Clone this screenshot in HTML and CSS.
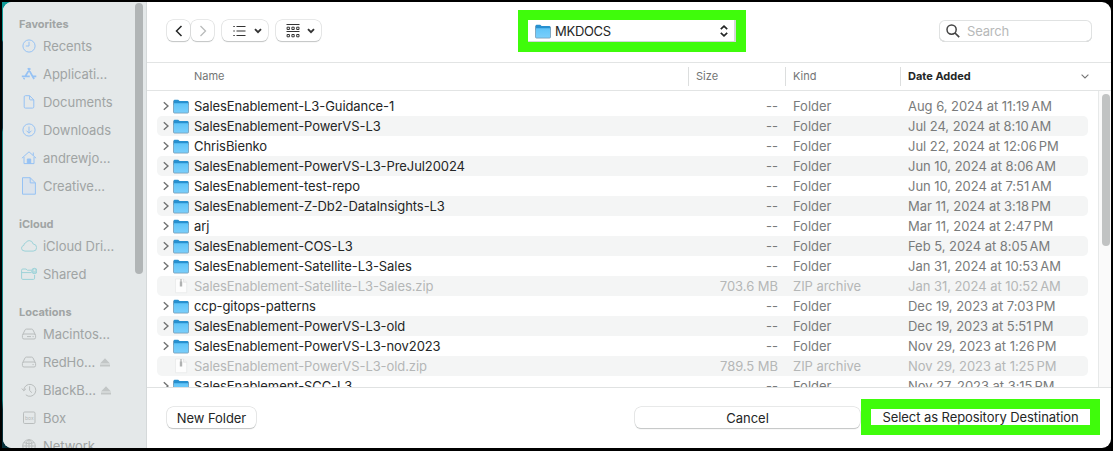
FILE: index.html
```html
<!DOCTYPE html>
<html lang="en">
<head>
<meta charset="utf-8">
<title>Select Repository Destination</title>
<link rel="stylesheet" href="styles.css">
</head>
<body>
<svg class="defs" width="0" height="0" aria-hidden="true">
  <defs>
    <linearGradient id="blue" x1="0" y1="0" x2="0" y2="1"><stop offset="0" stop-color="#5fc4f8"/><stop offset="1" stop-color="#7bcffb"/></linearGradient>
    <symbol id="folder" viewBox="0 0 16 15">
      <path d="M.5 2Q.5.8 1.700.8h3.500l1.400 1.100h7.700q1.200 0 1.200 1.200V6H.5z" fill="#2790cf"/>
      <path d="M.5 4.200h15v8.900q0 1-1 1h-13q-1 0-1-1z" fill="url(#blue)"/>
      <path d="M.5 2v11.100q0 1 1 1h13q1 0 1-1V3" fill="none" stroke="#6b91aa" stroke-width=".7"/>
    </symbol>
    <symbol id="zip" viewBox="0 0 16 16">
      <path d="M2.500 1h8l3.200 3.200v10.500H2.500z" fill="#fdfdfd" stroke="#e6e8e8" stroke-width=".7"/>
      <path d="M10.500 1v3.200h3.200" fill="#f2f2f2" stroke="#ddd" stroke-width=".6"/>
      <path d="M8 1v4" stroke="#b9bbbb" stroke-width="1.400"/><path d="M8 3.500v5" stroke="#b0b2b2" stroke-width="2.400"/>
    </symbol>
    <symbol id="chev" viewBox="0 0 6 10"><path d="M.8 1.200 5 5 .8 8.800" fill="none" stroke="#707272" stroke-width="1.400"/></symbol>
    <symbol id="drive" viewBox="0 0 16 16"><path d="M1.700 8.600 4 4q.4-.9 1.400-.9h5.200q1 0 1.400.9l2.300 4.600M3 8h10q1.600 0 1.600 1.600v1.800Q14.600 13 13 13H3q-1.600 0-1.600-1.600V9.600Q1.400 8 3 8z"/><path d="M11.500 10.600h1.200"/></symbol>
    <symbol id="eject" viewBox="0 0 10 9"><path d="M5 .2 10 5.400H0zM0 6.600h10v2H0z" fill="#c2c6c6"/></symbol>
  </defs>
</svg>
<div class="dialog">
  <nav class="sidebar">
    <section class="group">
      <h2>Favorites</h2>
      <div class="item blue"><svg viewBox="0 0 16 16"><circle cx="8" cy="8" r="6.100"/><path d="M8 3.800V8H4.800"/></svg><span>Recents</span></div>
      <div class="item blue"><svg viewBox="0 0 16 16"><path d="M7 2.200 11.900 11l1.200 2M9.200 2.200 4.300 10.200M3.400 12l-.7 1.200M.8 10.400h8M11.500 10.400h3.800" stroke-width="1.700"/></svg><span>Applicati...</span></div>
      <div class="item blue"><svg viewBox="0 0 16 16"><path d="M4.400 1.700h4.200l4.200 4.200v7q0 1.200-1.200 1.200H4.400q-1.200 0-1.200-1.200v-10q0-1.200 1.200-1.200zM8.600 1.700V5q0 .9.900.9h3.300"/></svg><span>Documents</span></div>
      <div class="item blue"><svg viewBox="0 0 16 16"><circle cx="8" cy="8" r="6.100"/><path d="M8 4.600v6.400M5.500 8.700 8 11.200l2.500-2.500"/></svg><span>Downloads</span></div>
      <div class="item blue"><svg viewBox="0 0 16 16"><path d="M.9 8.200 8 1.800l7.100 6.400M3 7v6.600h10V7M12.300 2.500v3"/><path d="M6.300 13.500V9h3.400v4.500z" fill="#96c2f4"/></svg><span>andrewjo...</span></div>
      <div class="item blue"><svg class="page" viewBox="0 0 16 18"><path d="M1.500.7h7.700l5.200 5.200v11.300H1.500z" fill="#dbe3ec"/><path d="M9.200.7v5.200h5.200"/></svg><span>Creative...</span></div>
    </section>
    <section class="group">
      <h2>iCloud</h2>
      <div class="item teal"><svg viewBox="0 0 16 16"><path d="M4 13.100Q.5 13 .5 10.200q0-2.200 2.400-2.900-.1-2.200 1.800-2.400Q5.800 2.600 8.200 2.600q3.100 0 4 3.400 3.400.3 3.400 3.600 0 3.500-3.400 3.500z"/></svg><span>iCloud Dri...</span></div>
      <div class="item teal"><svg viewBox="0 0 16 16"><path d="M10.300 4.200H6.400L5 3H1.800Q.6 3 .6 4.200v8q0 1.200 1.200 1.200h10.600q1.200 0 1.200-1.200V9M.6 6.600h9.800"/><circle cx="13.400" cy="5" r="2.700" fill="#b4dade"/><circle cx="13.400" cy="4.200" r=".5" fill="#e4e8e9" stroke="#e4e8e9"/></svg><span>Shared</span></div>
    </section>
    <section class="group">
      <h2>Locations</h2>
      <div class="item gray"><svg viewBox="0 0 16 16"><use href="#drive"/><path d="M6 10.600h4"/></svg><span>Macintos...</span></div>
      <div class="item gray"><svg viewBox="0 0 16 16"><use href="#drive"/></svg><span>RedHo...</span><svg class="eject"><use href="#eject"/></svg></div>
      <div class="item gray"><svg viewBox="0 0 16 16"><path d="M2.800 8.500a6 6 0 1 1 2 4.300M.8 6.500l2 2.300L5 6.700M8.600 4.300v4.200l2.300 2.200"/></svg><span>BlackB...</span><svg class="eject"><use href="#eject"/></svg></div>
      <div class="item gray"><svg viewBox="0 0 16 16"><rect x="2.500" y="2" width="11.500" height="11.500" rx="1.200"/><text x="4" y="9.700" class="boxmark">box</text></svg><span>Box</span></div>
      <div class="item gray"><svg viewBox="0 0 16 16"><circle cx="8" cy="8" r="6.300"/><ellipse cx="8" cy="8" rx="2.900" ry="6.300"/><path d="M8 1.700v12.600M1.700 8h12.600M2.900 4.600q5.100 2.400 10.200 0"/></svg><span>Network</span></div>
    </section>
    <div class="side-thumb"></div>
  </nav>
  <main class="main">
    <header class="toolbar">
      <div class="tools">
        <button class="btn nav"><svg width="8" height="12" viewBox="0 0 8 12"><path d="M6.500 1 1.500 6l5 5" stroke="#242626" stroke-width="1.500"/></svg></button>
        <button class="btn nav"><svg width="8" height="12" viewBox="0 0 8 12"><path d="m1.500 1 5 5-5 5" stroke="#b9bbbb" stroke-width="1.300"/></svg></button>
        <button class="btn view list"><svg width="13" height="12" viewBox="0 0 13 12"><path d="M3.500 1.500h9M3.500 6h9M3.500 10.500h9M.3 1.500h1.500M.3 6h1.500M.3 10.500h1.500" stroke="#333" stroke-width="1.200"/></svg><svg width="8" height="6" viewBox="0 0 8 6"><path d="m1 1.200 3 3 3-3" stroke="#333" stroke-width="1.900"/></svg></button>
        <button class="btn view"><svg width="14" height="14" viewBox="0 0 14 14"><path d="M.5.500h13M.5 7.500h13" stroke="#333"/><path d="M1.100 3.200h2.300v2.300H1.100zM5.900 3.200h2.300v2.300H5.900zM10.700 3.200H13v2.300h-2.300zM1.100 10.500h2.300v2.300H1.100zM5.900 10.500h2.300v2.300H5.900zM10.700 10.500H13v2.300h-2.300z" stroke="#333"/></svg><svg width="8" height="6" viewBox="0 0 8 6"><path d="m1 1.200 3 3 3-3" stroke="#333" stroke-width="1.900"/></svg></button>
      </div>
      <div class="highlight place"><button class="popup"><svg class="folder"><use href="#folder"/></svg><span>MKDOCS</span><svg class="updown" width="8" height="12" viewBox="0 0 8 12"><path d="m.8 4.200 3.200-3 3.200 3M.8 7.800l3.200 3 3.200-3" stroke="#242626" stroke-width="1.700"/></svg></button></div>
      <div class="search"><svg width="14" height="14" viewBox="0 0 14 14"><circle cx="5.600" cy="5.600" r="4.600" stroke="#444" stroke-width="1.500"/><path d="m9 9 4.200 4.200" stroke="#444" stroke-width="1.700"/></svg><span>Search</span></div>
    </header>
    <div class="columns">
      <span class="h-name">Name</span><span class="h">Size</span><span class="h">Kind</span><span class="h sorted">Date Added<svg width="8" height="5" viewBox="0 0 8 5"><path d="m.6.600 3.400 3.400L7.400.6" stroke="#777" stroke-width="1.100"/></svg></span>
    </div>
    <div class="files">
      <div class="rows">
        <div class="row"><svg class="chev"><use href="#chev"/></svg><svg class="folder"><use href="#folder"/></svg><span class="name">SalesEnablement-L3-Guidance-1</span><span class="size">--</span><span>Folder</span><span class="date">Aug 6, 2024 at 11:19<i></i>AM</span></div>
        <div class="row"><svg class="chev"><use href="#chev"/></svg><svg class="folder"><use href="#folder"/></svg><span class="name">SalesEnablement-PowerVS-L3</span><span class="size">--</span><span>Folder</span><span class="date">Jul 24, 2024 at 8:10<i></i>AM</span></div>
        <div class="row"><svg class="chev"><use href="#chev"/></svg><svg class="folder"><use href="#folder"/></svg><span class="name">ChrisBienko</span><span class="size">--</span><span>Folder</span><span class="date">Jul 22, 2024 at 12:06<i></i>PM</span></div>
        <div class="row"><svg class="chev"><use href="#chev"/></svg><svg class="folder"><use href="#folder"/></svg><span class="name">SalesEnablement-PowerVS-L3-PreJul20024</span><span class="size">--</span><span>Folder</span><span class="date">Jun 10, 2024 at 8:06<i></i>AM</span></div>
        <div class="row"><svg class="chev"><use href="#chev"/></svg><svg class="folder"><use href="#folder"/></svg><span class="name">SalesEnablement-test-repo</span><span class="size">--</span><span>Folder</span><span class="date">Jun 10, 2024 at 7:51<i></i>AM</span></div>
        <div class="row"><svg class="chev"><use href="#chev"/></svg><svg class="folder"><use href="#folder"/></svg><span class="name">SalesEnablement-Z-Db2-DataInsights-L3</span><span class="size">--</span><span>Folder</span><span class="date">Mar 11, 2024 at 3:18<i></i>PM</span></div>
        <div class="row"><svg class="chev"><use href="#chev"/></svg><svg class="folder"><use href="#folder"/></svg><span class="name">arj</span><span class="size">--</span><span>Folder</span><span class="date">Mar 11, 2024 at 2:47<i></i>PM</span></div>
        <div class="row"><svg class="chev"><use href="#chev"/></svg><svg class="folder"><use href="#folder"/></svg><span class="name">SalesEnablement-COS-L3</span><span class="size">--</span><span>Folder</span><span class="date">Feb 5, 2024 at 8:05<i></i>AM</span></div>
        <div class="row"><svg class="chev"><use href="#chev"/></svg><svg class="folder"><use href="#folder"/></svg><span class="name">SalesEnablement-Satellite-L3-Sales</span><span class="size">--</span><span>Folder</span><span class="date">Jan 31, 2024 at 10:53<i></i>AM</span></div>
        <div class="row disabled"><span></span><svg class="zip"><use href="#zip"/></svg><span class="name">SalesEnablement-Satellite-L3-Sales.zip</span><span class="size">703.6 MB</span><span>ZIP archive</span><span class="date">Jan 31, 2024 at 10:52<i></i>AM</span></div>
        <div class="row"><svg class="chev"><use href="#chev"/></svg><svg class="folder"><use href="#folder"/></svg><span class="name">ccp-gitops-patterns</span><span class="size">--</span><span>Folder</span><span class="date">Dec 19, 2023 at 7:03<i></i>PM</span></div>
        <div class="row"><svg class="chev"><use href="#chev"/></svg><svg class="folder"><use href="#folder"/></svg><span class="name">SalesEnablement-PowerVS-L3-old</span><span class="size">--</span><span>Folder</span><span class="date">Dec 19, 2023 at 5:51<i></i>PM</span></div>
        <div class="row"><svg class="chev"><use href="#chev"/></svg><svg class="folder"><use href="#folder"/></svg><span class="name">SalesEnablement-PowerVS-L3-nov2023</span><span class="size">--</span><span>Folder</span><span class="date">Nov 29, 2023 at 1:26<i></i>PM</span></div>
        <div class="row disabled"><span></span><svg class="zip"><use href="#zip"/></svg><span class="name">SalesEnablement-PowerVS-L3-old.zip</span><span class="size">789.5 MB</span><span>ZIP archive</span><span class="date">Nov 29, 2023 at 1:25<i></i>PM</span></div>
        <div class="row"><svg class="chev"><use href="#chev"/></svg><svg class="folder"><use href="#folder"/></svg><span class="name">SalesEnablement-SCC-L3</span><span class="size">--</span><span>Folder</span><span class="date">Nov 27, 2023 at 3:15<i></i>PM</span></div>
      </div>
      <div class="track"><div class="thumb"></div></div>
    </div>
    <footer class="footer">
      <button class="btn new">New Folder</button>
      <button class="btn cancel">Cancel</button>
      <div class="highlight choose"><button class="select">Select as Repository Destination</button></div>
    </footer>
  </main>
</div>
</body>
</html>
```
FILE: styles.css
```css
* { box-sizing: border-box; }
body {
  margin: 0;
  width: 1113px;
  height: 451px;
  padding: 2px 2px 3px 3px;
  overflow: hidden;
  background: linear-gradient(90deg, #000 2px, transparent 2px, transparent 12px, #000 12px), linear-gradient(#0f9a98 0 40px, #0b3446 42px 128px, #14868a 132px 400px, #06303a 410px);
  font: 13px/20px Inter, "Liberation Sans", sans-serif;
  color: #242626;
  box-shadow: inset 0 2px #000, inset 0 -3px #000;
}
.defs { position: absolute; }
button { font: inherit; color: inherit; padding: 0; margin: 0; border: 0; background: #fff; }
svg { display: block; fill: none; flex: none; }
.dialog { display: flex; width: 1108px; height: 446px; background: #fff; border-radius: 9px; overflow: hidden; }

.sidebar { position: relative; width: 144px; height: 446px; flex: none; padding: 14px 0 0 16px; background: #e4e8e9; border-right: 1px solid #d5d9da; overflow: hidden; color: #a0a4a4; }
.group { margin-bottom: 16px; }
.group h2 { margin: 0; height: 16px; font-size: 11px; line-height: 16px; font-weight: 700; letter-spacing: -.02px; color: #a0a4a4; }
.item { display: flex; align-items: center; height: 28px; padding-left: 2px; white-space: nowrap; }
.item > svg { width: 16px; height: 16px; stroke-width: 1; }
.item > .page { height: 18px; }
.item span { margin-left: 6px; letter-spacing: -.04px; }
.item > .eject { width: 10px; height: 9px; margin-left: 5px; stroke: none; }
.blue { stroke: #96c2f4; }
.teal { stroke: #9dd2d8; }
.gray { stroke: #b9bdbd; }
.boxmark { font: 5px Inter, sans-serif; fill: #b4b8b8; stroke: none; }
.side-thumb { position: absolute; top: 1px; right: 3px; width: 8px; height: 271px; border-radius: 4px; background: #b1b5b6; }

.main { flex: 1; display: flex; flex-direction: column; min-width: 0; }
.toolbar { display: flex; height: 60px; flex: none; align-items: flex-start; padding: 8px 19px 0 20px; }
.tools { display: flex; width: 351px; padding-top: 10px; }
.btn { height: 21px; border-radius: 6px; display: flex; align-items: center; justify-content: center; box-shadow: 0 0 0 .5px #d2d4d4, 0 1px 1px #b5b7b7; }
.nav { width: 23px; margin-right: 1px; }
.nav + .nav { margin: 0 8px 0 0; }
.view { width: 45px; justify-content: space-between; padding: 0 6px 0 10px; }
.list { width: 46px; margin-right: 8px; padding-left: 11px; }
.highlight { background: #3ffc0b; flex: none; }
.place { width: 228px; height: 42px; padding: 10px; }
.popup { display: flex; align-items: center; width: 208px; height: 22px; padding: 0 8px 0 7px; box-shadow: inset -2px -1px #d4d7d7; }
.popup span { margin-left: 4px; letter-spacing: -.3px; line-height: 20px; padding-bottom: 1px; }
.updown { margin-left: auto; }
.search { display: flex; align-items: center; width: 153px; height: 22px; margin: 10px 0 0 auto; padding-left: 7px; border-radius: 6px; color: #b7b9b9; box-shadow: inset 0 0 0 1px #e0e2e2, inset 0 -1px #b8baba; }
.search span { margin-left: 7px; letter-spacing: -.2px; }
.columns { display: grid; grid-template-columns: 541px 97px 115px 1fr; height: 29px; flex: none; align-items: center; border: solid #e2e4e4; border-width: 1px 0; font-size: 11px; line-height: 19px; color: #737575; }
.h-name { padding-left: 47px; }
.h { border-left: 1px solid #dcdede; padding-left: 7px; }
.sorted { display: flex; align-items: center; justify-content: space-between; padding-right: 22px; font-weight: 700; color: #242626; }
.files { display: flex; height: 296px; flex: none; overflow: hidden; }
.rows { flex: 1; padding: 5px 10px 0; }
.row { display: grid; grid-template-columns: 10px 21px 480px 104px 130px 1fr; padding-left: 6px; height: 20px; align-items: center; border-radius: 5px; color: #797b7b; white-space: nowrap; }
.row:nth-child(even) { background: #f4f5f5; }
.name { color: #242626; letter-spacing: -.08px; }
.size { text-align: right; letter-spacing: -.04px; }
.row > .size + span { padding-left: 15px; letter-spacing: -.04px; }
.date { letter-spacing: -.04px; }
.date i { display: inline-block; width: 2px; }
.disabled, .disabled .name { color: #b5b7b7; }
.chev { width: 6px; height: 10px; }
.folder { width: 16px; height: 15px; }
.zip { width: 16px; height: 16px; }
.track { width: 13px; border-left: 1px solid #e7e9e9; background: #fafafa; padding: 3px 0 0 3px; }
.thumb { width: 8px; height: 152px; border-radius: 4px; background: #c1c3c3; }
.footer { display: flex; flex: 1; padding: 11px 11px 0 20px; border-top: 1px solid #e0e2e2; }
.new { width: 89px; margin-top: 8px; letter-spacing: -.06px; }
.cancel { width: 225px; margin: 8px 0 0 379px; }
.choose { width: 239px; height: 36px; padding: 10px; margin-left: auto; }
.select { display: block; width: 219px; height: 16px; line-height: 16px; white-space: nowrap; letter-spacing: -.07px; }
```
